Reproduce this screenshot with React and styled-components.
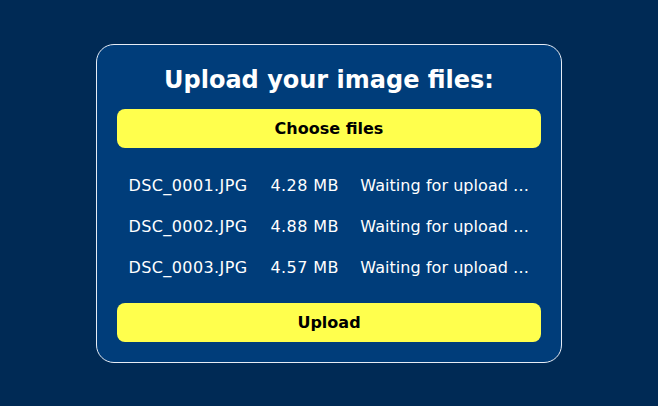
import styled, { createGlobalStyle } from "styled-components";

const GlobalStyle = createGlobalStyle`
  html, body {
    margin: 0;
    padding: 0;
    background: #002a55;
    font-family: "DejaVu Sans", Verdana, sans-serif;
  }
`;

const Page = styled.div`
  height: 406px;
  display: flex;
  align-items: center;
  justify-content: center;
`;

const Card = styled.div`
  width: 424px;
  padding: 20px;
  background: #003d7a;
  border: 1px solid #e6ecf5;
  border-radius: 18px;
  display: flex;
  flex-direction: column;
`;

const Title = styled.h1`
  margin: 0 0 14px;
  color: #fff;
  font-size: 24px;
  line-height: 30px;
  font-weight: bold;
  text-align: center;
`;

const Button = styled.button`
  height: 39px;
  border: none;
  border-radius: 8px;
  background: #ffff4d;
  color: #000;
  font-family: inherit;
  font-size: 16px;
  font-weight: bold;
  cursor: pointer;
`;

const FileList = styled.div`
  margin: 17px 0 15px;
  display: flex;
  flex-direction: column;
`;

const FileRow = styled.div`
  display: grid;
  grid-template-columns: auto auto 1fr;
  height: 41px;
  align-items: center;
  color: #fff;
  font-size: 16px;
  letter-spacing: 0.4px;
`;

const Cell = styled.span`
  padding: 0 ${(p) => (p.$status ? "10px" : "11.5px")};
  letter-spacing: ${(p) => (p.$status ? "0.05px" : "inherit")};
  white-space: nowrap;
`;

const files = [
  { name: "DSC_0001.JPG", size: "4.28 MB" },
  { name: "DSC_0002.JPG", size: "4.88 MB" },
  { name: "DSC_0003.JPG", size: "4.57 MB" },
];

export default function App() {
  return (
    <Page>
      <GlobalStyle />
      <Card>
        <Title>Upload your image files:</Title>
        <Button>Choose files</Button>
        <FileList>
          {files.map((f) => (
            <FileRow key={f.name}>
              <Cell>{f.name}</Cell>
              <Cell>{f.size}</Cell>
              <Cell $status>Waiting for upload …</Cell>
            </FileRow>
          ))}
        </FileList>
        <Button>Upload</Button>
      </Card>
    </Page>
  );
}
